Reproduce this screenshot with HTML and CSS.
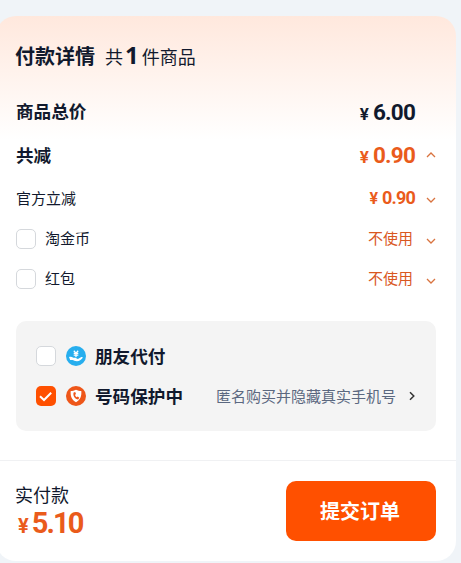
FILE: index.html
```html
<!DOCTYPE html>
<html lang="zh-CN">
<head>
    <meta charset="UTF-8">
    <meta name="viewport" content="width=device-width, initial-scale=1.0">
    <title>付款详情</title>
    <link rel="stylesheet" href="styles.css">
</head>
<body>

<div class="pay-card">
    <div class="details">
        <div class="title">
            <h2>付款详情</h2>
            <span class="count">共<b>1</b>件商品</span>
        </div>

        <div class="row row-total">
            <span class="name">商品总价</span>
            <span class="price"><i>¥</i>6.00</span>
        </div>
        <div class="row row-discount">
            <span class="name">共减</span>
            <span class="price orange"><i>¥</i>0.90</span>
            <svg class="arrow" viewBox="0 0 10 10"><path d="M1 7l4-4 4 4"/></svg>
        </div>
        <div class="row row-official">
            <span class="label">官方立减</span>
            <span class="price small orange"><i>¥</i>0.90</span>
            <svg class="arrow down" viewBox="0 0 10 10"><path d="M1 3l4 4 4-4"/></svg>
        </div>
        <div class="row">
            <span class="checkbox"></span>
            <span class="label">淘金币</span>
            <span class="unused">不使用</span>
            <svg class="arrow down" viewBox="0 0 10 10"><path d="M1 3l4 4 4-4"/></svg>
        </div>
        <div class="row">
            <span class="checkbox"></span>
            <span class="label">红包</span>
            <span class="unused">不使用</span>
            <svg class="arrow down" viewBox="0 0 10 10"><path d="M1 3l4 4 4-4"/></svg>
        </div>

        <div class="options">
            <div class="option">
                <span class="checkbox"></span>
                <svg class="icon" viewBox="0 0 20 20">
                    <circle cx="10" cy="10" r="10" fill="#27aeee"/>
                    <path d="M7.8 4.7l2.2 2.4 2.2-2.4M10 7v4M7.7 7.4h4.6M7.7 9.2h4.6" fill="none" stroke="#fff" stroke-width="1.3"/>
                    <path d="M3 10.9c1.8-.6 3.200 0 4.300.9h2.900c.8 0 .8 1 0 1.100l2.200-.1 3-1.700c1-.5 1.700.4 1 1.200-1.300 1.500-3 2.900-5.400 2.900-2.200 0-3.300-.8-4.500-1.200H4.200z" fill="#fff"/>
                </svg>
                <span class="name">朋友代付</span>
            </div>
            <div class="option">
                <span class="checkbox checked">
                    <svg viewBox="0 0 20 20"><path d="M4 10.300l4 3.700 7.200-7.200"/></svg>
                </span>
                <svg class="icon" viewBox="0 0 20 20">
                    <circle cx="10" cy="10" r="10" fill="#ee5619"/>
                    <path d="M10 3.800c1.800 1 3.500 1.200 5.300 1.300.4 5.300-1 9-5.300 11.200-4.300-2.200-5.700-5.900-5.300-11.200 1.800-.1 3.500-.3 5.300-1.300z" fill="#fff"/>
                    <path d="M7.600 6.500c-1 3 1.200 6.600 4.600 7l1.100-1.700-1.600-1.200-1 .7c-.9-.6-1.500-1.500-1.600-2.500l.9-.8-.8-1.900z" fill="#ee5619"/>
                </svg>
                <span class="name">号码保护中</span>
                <span class="tip">匿名购买并隐藏真实手机号</span>
                <svg class="more" viewBox="0 0 10 10"><path d="M3 1.200L6.800 5 3 8.800"/></svg>
            </div>
        </div>
    </div>

    <div class="footer">
        <div class="amount">
            <span class="amount-label">实付款</span>
            <span class="price big orange"><i>¥</i>5.10</span>
        </div>
        <button class="submit">提交订单</button>
    </div>
</div>

</body>
</html>
```

FILE: styles.css
```css
body {
    margin: 0;
    height: 563px;
    overflow: hidden;
    background-color: #f0f4f8;
    color: #11192d;
    font-family: "Noto Sans CJK SC", sans-serif;
}
/* payment card */
.pay-card {
    box-sizing: border-box;
    width: 460px;
    height: 545px;
    margin: 16px 0 0 -4px;
    border-radius: 20px;
    background: linear-gradient(#ffe8dd 0, #fff 124px);
}
.details {
    box-sizing: border-box;
    height: 444px;
    padding: 6px 20px 0;
}
/* title */
.title {
    display: flex;
    align-items: center;
    height: 68px;
    margin-left: -1px;
}
.title h2 {
    margin: 0;
    font-size: 20px;
    line-height: 30px;
}
.count {
    margin-left: 10px;
    font-size: 18px;
    line-height: 30px;
}
.count b {
    margin: 0 3px 0 2px;
    font-family: "Noto Sans", sans-serif;
    font-size: 24px;
    line-height: 24px;
}
/* rows */
.row {
    display: flex;
    align-items: center;
    height: 40px;
}
.row-total {
    height: 43px;
    padding-right: 20px;
}
.row-discount {
    height: 44px;
}
.row-official {
    height: 42px;
}
.name {
    padding-bottom: 1px;
    font-size: 17.6px;
    font-weight: bold;
    line-height: 26px;
}
.label {
    margin-left: -1px;
    padding-bottom: 2px;
    font-size: 15px;
    line-height: 22px;
}
.row-official .label {
    margin-left: 0;
    padding-bottom: 0;
}
.price {
    margin-left: auto;
    margin-right: 1px;
    padding-top: 2px;
    font-family: Roboto, sans-serif;
    font-size: 22.5px;
    font-weight: bold;
    line-height: 26px;
    letter-spacing: -0.8px;
}
.price i {
    margin-right: 4px;
    font-size: 17px;
    font-style: normal;
    letter-spacing: 0;
}
.price.small {
    padding-top: 0;
    font-size: 18px;
    letter-spacing: -0.8px;
}
.price.small i {
    font-size: 16px;
}
.orange {
    color: #ea5b1b;
}
.unused {
    margin-left: auto;
    margin-right: 3px;
    padding-bottom: 2px;
    color: #d9581f;
    font-size: 15px;
    line-height: 22px;
}
.arrow {
    width: 10px;
    height: 10px;
    margin-left: 10px;
    fill: none;
    stroke: #d9733f;
    stroke-width: 1.3;
}
.arrow.down {
    margin-top: 4px;
}
/* checkbox */
.checkbox {
    box-sizing: border-box;
    flex: none;
    width: 20px;
    height: 20px;
    margin-right: 10px;
    border: 1px solid #d5d8dc;
    border-radius: 5px;
    background-color: #fff;
}
.checkbox.checked {
    border: none;
    background-color: #ff5000;
}
.checkbox svg {
    display: block;
    fill: none;
    stroke: #fff;
    stroke-width: 2;
}
/* grey options box */
.options {
    box-sizing: border-box;
    height: 110px;
    margin-top: 22px;
    padding: 15px 20px;
    border-radius: 10px;
    background-color: #f4f4f4;
}
.option {
    display: flex;
    align-items: center;
    height: 40px;
}
.option .name {
    padding-bottom: 0;
}
.icon {
    width: 20px;
    height: 20px;
    margin-right: 9px;
}
.tip {
    margin-left: auto;
    color: #5b6880;
    font-size: 15px;
    line-height: 22px;
}
.more {
    width: 10px;
    height: 10px;
    margin-left: 11px;
    margin-right: -1px;
    fill: none;
    stroke: #333;
    stroke-width: 1.5;
}
/* footer */
.footer {
    box-sizing: border-box;
    display: flex;
    align-items: center;
    justify-content: space-between;
    height: 101px;
    padding: 0 20px;
    border-top: 1px solid #f0f1f3;
}
.amount {
    display: flex;
    flex-direction: column;
}
.amount-label {
    margin-left: -1px;
    font-size: 18px;
    line-height: 24px;
}
.price.big {
    margin-left: 2px;
    padding-top: 3px;
    font-size: 29px;
    line-height: 28px;
    letter-spacing: -1.9px;
}
.price.big i {
    margin-right: 3px;
    font-size: 20px;
}
.submit {
    width: 150px;
    height: 60px;
    padding: 0 2px 1px 0;
    border: none;
    border-radius: 10px;
    background-color: #ff5000;
    color: #fff;
    font-family: inherit;
    font-size: 20px;
    font-weight: bold;
}
```
